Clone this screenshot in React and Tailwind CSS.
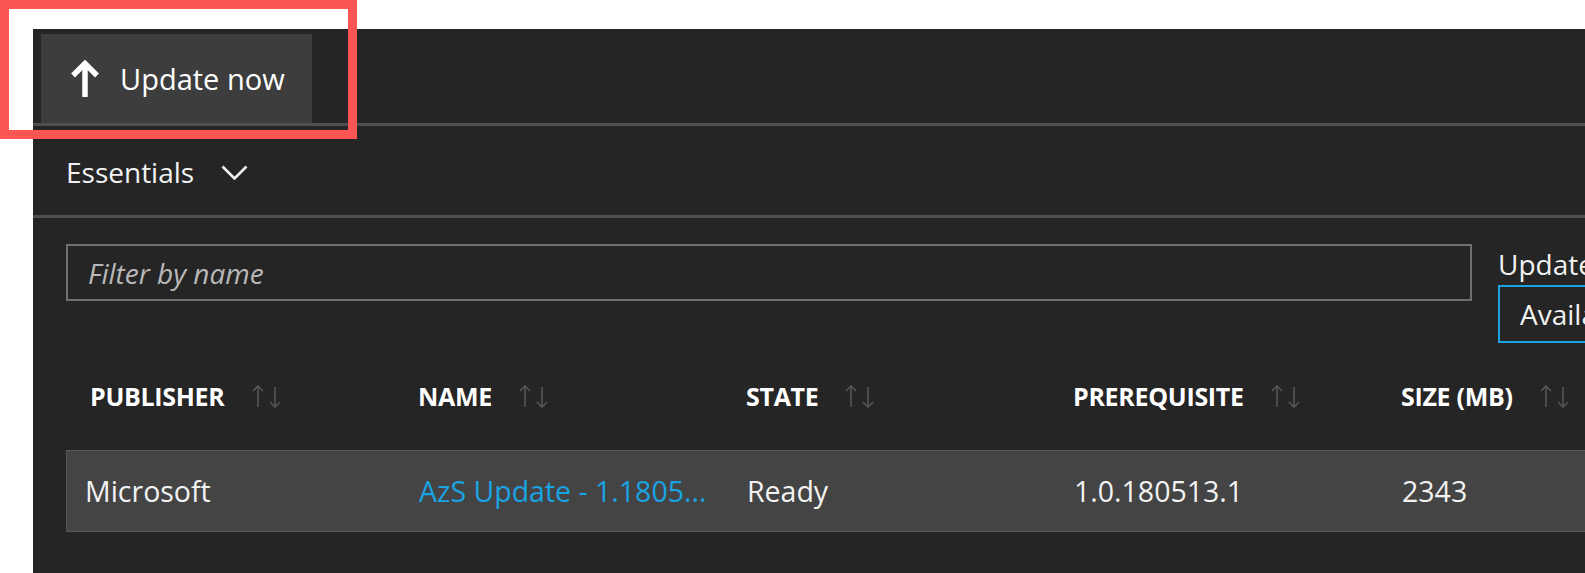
import React from 'react'

const font = { fontFamily: '"Open Sans", "Noto Sans", sans-serif' }

function SortIcon() {
  return (
    <svg width="33" height="25" viewBox="0 0 33 25" fill="none" stroke="#555" strokeWidth="1.6">
      <path d="M8 23V2M3 7l5-5 5 5" />
      <path d="M25 3v20M20 18l5 5 5-5" />
    </svg>
  )
}

const columns = [
  { label: 'PUBLISHER', width: 'w-[334px]', pad: 'pl-[24px]' },
  { label: 'NAME', width: 'w-[328px]', pad: 'pl-[18px]' },
  { label: 'STATE', width: 'w-[327px]', pad: 'pl-[18px]' },
  { label: 'PREREQUISITE', width: 'w-[326px]', pad: 'pl-[18px]' },
  { label: 'SIZE (MB)', width: 'w-[300px]', pad: 'pl-[20px]' },
]

export default function App() {
  return (
    <div className="relative w-[1585px] h-[573px] overflow-hidden bg-white text-[#f2f2f2]" style={font}>
      <div className="pt-[29px] pl-[33px] h-full">
        <div className="w-[1750px] h-full bg-[#252525] flex flex-col">
          {/* Toolbar */}
          <div className="h-[94px] pt-[5px] pl-[8px] flex">
            <button className="w-[271px] h-[89px] bg-[#3d3d3d] flex items-center pl-[29px] gap-[20px] text-[29px] text-white">
              <svg width="30" height="37" viewBox="0 0 30 37" fill="none" stroke="white" strokeWidth="5.5" strokeLinecap="square">
                <path d="M15 35V5" />
                <path d="M3 15.5L15 3.5l12 12" strokeLinecap="butt" />
              </svg>
              <span>Update now</span>
            </button>
          </div>
          <div className="h-[3px] bg-[#4f4f4f]" />

          {/* Essentials */}
          <div className="h-[89px] pl-[33px] pt-[3px] flex items-center gap-[27px] text-[28px]">
            <span>Essentials</span>
            <svg width="27" height="15" viewBox="0 0 27 15" fill="none" stroke="#f2f2f2" strokeWidth="2.6">
              <path d="M1.5 1.5l12 12 12-12" />
            </svg>
          </div>
          <div className="h-[3px] bg-[#4f4f4f]" />

          {/* Filter */}
          <div className="h-[125px] pt-[26px] pl-[33px] flex gap-[26px]">
            <div className="w-[1406px] h-[57px] shrink-0 border-2 border-[#707070] flex items-center pl-[20px]">
              <span className="italic text-[28px] text-[#b8b8b8]">Filter by name</span>
            </div>
            <div className="flex flex-col shrink-0">
              <div className="text-[28px] leading-[41px]">Update</div>
              <div className="w-[200px] h-[58px] border-2 border-[#1aa3e2] flex items-center pl-[20px] text-[28px]">
                Available
              </div>
            </div>
          </div>

          {/* Table header */}
          <div className="h-[107px] pl-[33px] flex items-center">
            {columns.map(c => (
              <div key={c.label} className={`${c.width} ${c.pad} flex items-center gap-[25px] shrink-0`}>
                <span className="text-[25px] font-bold tracking-[-0.3px] text-white">{c.label}</span>
                <SortIcon />
              </div>
            ))}
          </div>

          {/* Row */}
          <div className="ml-[33px] h-[82px] bg-[#444444] border border-[#565656] flex items-center text-[28.5px]">
            <div className="w-[334px] pl-[18px] shrink-0">Microsoft</div>
            <div className="w-[328px] pl-[18px] shrink-0 text-[#1aa3e2] truncate">AzS Update - 1.1805...</div>
            <div className="w-[327px] pl-[18px] shrink-0">Ready</div>
            <div className="w-[326px] pl-[18px] shrink-0">1.0.180513.1</div>
            <div className="w-[300px] pl-[20px] shrink-0">2343</div>
          </div>
        </div>
      </div>

      {/* Highlight */}
      <div className="absolute left-0 top-0 w-[357px] h-[139px] border-[9px] border-[#fd5454]" />
    </div>
  )
}
